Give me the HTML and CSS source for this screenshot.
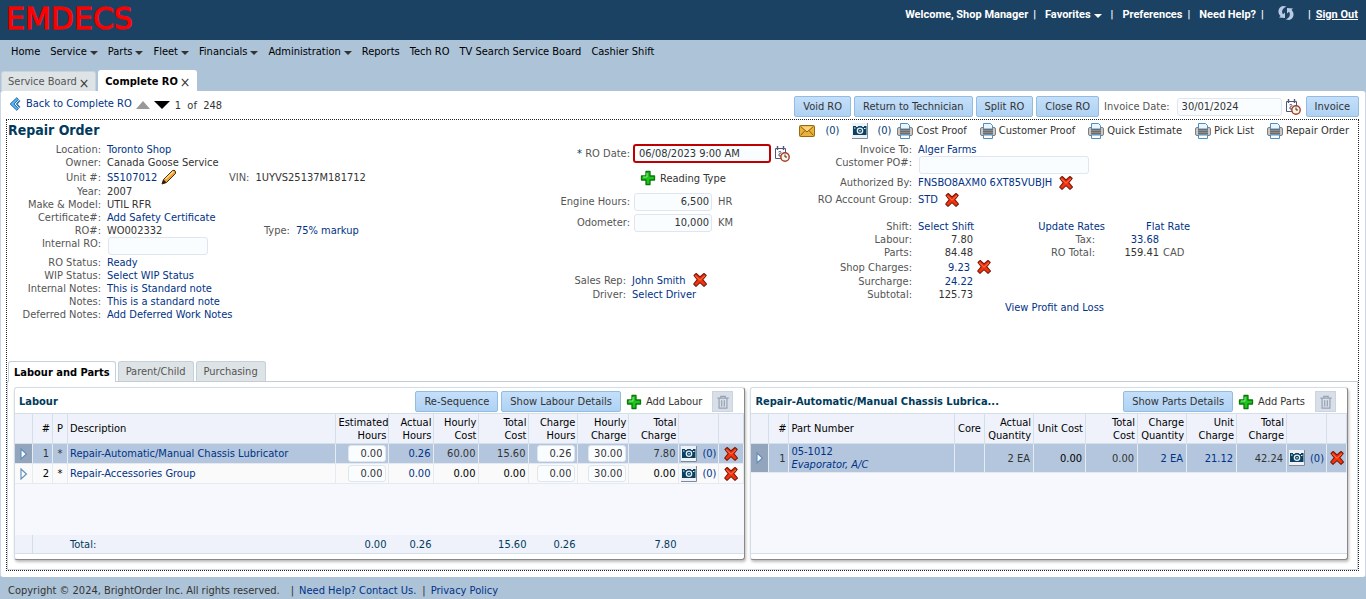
FILE: index.html
```html
<!DOCTYPE html>
<html lang="en">
<head>
<meta charset="utf-8">
<title>Complete RO</title>
<link rel="stylesheet" href="styles.css">
</head>
<body>
<svg class="sprite" aria-hidden="true">
  <symbol id="i-x" viewBox="0 0 16 16"><path d="M2 3.500 4.200 1.500 8 5 12 1.500 14.200 3.500 10.800 7.600 14.500 12 12 14.300 8 10.600 4 14.300 1.700 12 5.200 7.600Z" fill="#f5320c" stroke="#7c1a0a" stroke-width="1.100" stroke-linejoin="round"/><path d="M3.200 3.800 8 8.200 13 3.800" fill="none" stroke="#ff7a55" stroke-width="1"/></symbol>
  <symbol id="i-plus" viewBox="0 0 16 16"><path d="M6 1.500h4V6h4.500v4H10v4.500H6V10H1.500V6H6Z" fill="#1fc41f" stroke="#087808" stroke-width="1.300" stroke-linejoin="round"/><path d="M7 3v4H3" fill="none" stroke="#8df08d"/></symbol>
  <symbol id="i-print" viewBox="0 0 16 16"><rect x=".5" y="4.500" width="15" height="8" rx="1.500" fill="#c9c9c9" stroke="#7d7d7d"/><path d="M3.500.5h7l2 2V6h-9Z" fill="#e9f5ff" stroke="#4b8fc4"/><rect x="3" y="6" width="10" height="5.500" fill="#6d6d6d"/><path d="M3 7.500h10M3 9.500h10" stroke="#8c8c8c"/><path d="M3.500 12h9v3.500h-9Z" fill="#fff" stroke="#4b8fc4"/></symbol>
  <symbol id="i-cam" viewBox="0 0 16 16"><path d="M0 0h16v16H0Z" fill="#eef1f5"/><path d="M15.500 0v15.500H0" fill="none" stroke="#7e8b96"/><path d="M1 3h3v1h1.500L6.500 3h3l1 1H12V3h2.500v9H1Z" fill="#0a4060"/><circle cx="8" cy="7.800" r="3.300" fill="#e8f0f6"/><circle cx="8" cy="7.800" r="2" fill="#0a4060"/><circle cx="8" cy="7.800" r=".8" fill="#fff"/><path d="M2 5h1.500M12 5.500h1.500" stroke="#fff"/></symbol>
  <symbol id="i-mail" viewBox="0 0 16 16"><rect x=".5" y="2.500" width="15" height="11" rx="1" fill="#e9b23c" stroke="#99670d"/><path d="M2 3.500h12L8 8.500Z" fill="#fbd47c"/><path d="m1.500 3.500 6.500 5.500 6.500-5.500M1.500 12.500l4.500-5M14.500 12.500l-4.500-5" fill="none" stroke="#8b5f12"/></symbol>
  <symbol id="i-date" viewBox="0 0 16 16"><path d="M1.500 2.500h10v10h-10Z" fill="#fff" stroke="#55557a"/><path d="M3.500 0v4M9.500 0v4" stroke="#55557a" stroke-width="1.400"/><path d="M4.500 6q2.500-1.500 2.500.5 0 1-2 1.500v2h2" fill="none" stroke="#55557a"/><circle cx="11" cy="11" r="4.200" fill="#fff3e2" stroke="#a33b28" stroke-width="1.400"/><path d="M11 8.500V11h2" fill="none" stroke="#333"/></symbol>
  <symbol id="i-pencil" viewBox="0 0 16 16"><path d="M1 15 2.500 10.500 11.500 1.500Q15 .5 14.500 4.500L5.500 13.500Z" fill="#f0a030" stroke="#4a2d0c"/><path d="M1 15 2.500 10.500 5.500 13.500Z" fill="#2c1c10"/><path d="m4.500 10 8-7.500" stroke="#ffe09a" stroke-width="1.200"/></symbol>
  <symbol id="i-trash" viewBox="0 0 16 16"><path d="M1.500 3.500h13M5.500 3V1.500h5V3M3.500 4v11h9V4M6.500 6v7M9.500 6v7" fill="none" stroke="#97a3b4" stroke-width="1.400"/></symbol>
  <symbol id="i-back" viewBox="0 0 16 16"><path d="M10 .8 2.500 8 10 15.200l2-1.800L7 8l5-5.400Z" fill="#58b4f4" stroke="#145a9c"/><path d="M13.500 4 10 8l3.500 4" fill="none" stroke="#1c69ad" stroke-width="1.600"/></symbol>
  <symbol id="i-sync" viewBox="0 0 18 16"><path d="M9.500 1.500 6 1C1 2 0 8 3.500 11L2 12.500l6 .5V7.500L6 9.300C4 6.500 5.500 3 9.500 1.500Z" fill="#b9cbe4"/><path d="m8.500 14.500 3.500.5C17 14 18 8 14.500 5L16 3.500 10 3v5.500l2-1.800C14 9.500 12.500 13 8.500 14.500Z" fill="#b9cbe4"/></symbol>
  <symbol id="i-tri" viewBox="0 0 8 10"><path d="m1.500.800 4.500 4.200-4.500 4.200Z" fill="#fff" stroke="#6490bb"/></symbol>
</svg>

<header class="top">
  <div class="logo">EMDECS</div>
  <nav class="user">
    <span>Welcome, Shop Manager</span><i>|</i>
    <a class="fav" href="#">Favorites<b class="caret"></b></a><i>|</i>
    <a href="#">Preferences</a><i>|</i>
    <a href="#">Need Help?</a><i>|</i>
    <a class="sync" href="#" aria-label="Refresh"><svg><use href="#i-sync"/></svg></a><i>|</i>
    <a class="out" href="#">Sign Out</a>
  </nav>
</header>

<nav class="menu">
  <a href="#">Home</a><a href="#">Service<b class="caret"></b></a><a href="#">Parts<b class="caret"></b></a><a href="#">Fleet<b class="caret"></b></a><a href="#">Financials<b class="caret"></b></a><a href="#">Administration<b class="caret"></b></a><a href="#">Reports</a><a href="#">Tech RO</a><a href="#">TV Search Service Board</a><a href="#">Cashier Shift</a>
</nav>
<div class="tabs">
  <div class="tab"><a href="#">Service Board</a><button class="close" aria-label="Close Service Board">×</button></div>
  <div class="tab on"><a href="#">Complete RO</a><button class="close" aria-label="Close Complete RO">×</button></div>
</div>

<main>
  <div class="bar">
    <a class="back" href="#"><svg class="ic-s"><use href="#i-back"/></svg>Back to Complete RO</a>
    <button class="arrow up" aria-label="Previous"></button>
    <button class="arrow down" aria-label="Next"></button>
    <span class="pos">1&nbsp; of&nbsp; 248</span>
    <div class="actions">
      <button class="btn">Void RO</button>
      <button class="btn">Return to Technician</button>
      <button class="btn">Split RO</button>
      <button class="btn">Close RO</button>
      <label for="inv">Invoice Date:</label>
      <input id="inv" class="inv" value="30/01/2024">
      <button class="pick" aria-label="Pick invoice date"><svg class="ic"><use href="#i-date"/></svg></button>
      <button class="btn">Invoice</button>
    </div>
  </div>

  <section class="order">
    <div class="head">
      <h1>Repair Order</h1>
      <div class="tools">
        <a class="mail" href="#"><svg class="ic"><use href="#i-mail"/></svg>(0)</a>
        <a class="photo" href="#"><svg class="ic"><use href="#i-cam"/></svg>(0)</a>
        <a class="print" href="#"><svg class="ic"><use href="#i-print"/></svg>Cost Proof</a>
        <a class="print" href="#"><svg class="ic"><use href="#i-print"/></svg>Customer Proof</a>
        <a class="print" href="#"><svg class="ic"><use href="#i-print"/></svg>Quick Estimate</a>
        <a class="print" href="#"><svg class="ic"><use href="#i-print"/></svg>Pick List</a>
        <a class="print" href="#"><svg class="ic"><use href="#i-print"/></svg>Repair Order</a>
      </div>
    </div>

    <div class="form">
      <div class="col c1">
        <div class="row"><span class="lb">Location:</span><a href="#">Toronto Shop</a></div>
        <div class="row"><span class="lb">Owner:</span><span>Canada Goose Service</span></div>
        <div class="row mid"><span class="lb">Unit #:</span><span class="main vin"><a href="#">S5107012</a><button class="pick" aria-label="Edit unit"><svg class="ic"><use href="#i-pencil"/></svg></button></span><span class="lb2">VIN:</span><span>1UYVS25137M181712</span></div>
        <div class="row"><span class="lb">Year:</span><span>2007</span></div>
        <div class="row"><span class="lb">Make &amp; Model:</span><span>UTIL RFR</span></div>
        <div class="row"><span class="lb">Certificate#:</span><a href="#">Add Safety Certificate</a></div>
        <div class="row"><span class="lb">RO#:</span><span class="main type">WO002332</span><span class="lb2">Type:</span><a href="#">75% markup</a></div>
        <div class="row tall"><label class="lb" for="iro">Internal RO:</label><input id="iro" class="w-iro"></div>
        <div class="row"><span class="lb">RO Status:</span><a href="#">Ready</a></div>
        <div class="row"><span class="lb">WIP Status:</span><a href="#">Select WIP Status</a></div>
        <div class="row"><span class="lb">Internal Notes:</span><a href="#">This is Standard note</a></div>
        <div class="row"><span class="lb">Notes:</span><a href="#">This is a standard note</a></div>
        <div class="row"><span class="lb">Deferred Notes:</span><a href="#">Add Deferred Work Notes</a></div>
      </div>

      <div class="col c2">
        <div class="row r-date"><label class="lb" for="rod"><span class="star">*</span> RO Date:</label><input id="rod" class="w-rod" value="06/08/2023 9:00 AM"><button class="pick" aria-label="Pick RO date"><svg class="ic"><use href="#i-date"/></svg></button></div>
        <a class="add r-type" href="#"><svg class="ic"><use href="#i-plus"/></svg>Reading Type</a>
        <div class="row r-num"><label class="lb" for="eng">Engine Hours:</label><input id="eng" class="num w-num" value="6,500"><span class="unit">HR</span></div>
        <div class="row r-num"><label class="lb" for="odo">Odometer:</label><input id="odo" class="num w-num" value="10,000"><span class="unit">KM</span></div>
        <div class="people">
          <div class="row mid"><span class="lb">Sales Rep:</span><a href="#">John Smith</a><button class="pick" aria-label="Remove sales rep"><svg class="ic"><use href="#i-x"/></svg></button></div>
          <div class="row"><span class="lb">Driver:</span><a href="#">Select Driver</a></div>
        </div>
      </div>

      <div class="col c3">
        <div class="row"><span class="lb">Invoice To:</span><a href="#">Alger Farms</a></div>
        <div class="row tall"><label class="lb" for="po">Customer PO#:</label><input id="po" class="w-po"></div>
        <div class="row mid"><span class="lb">Authorized By:</span><a href="#">FNSBO8AXM0 6XT85VUBJH</a><button class="pick" aria-label="Remove authorizer"><svg class="ic"><use href="#i-x"/></svg></button></div>
        <div class="row mid"><span class="lb">RO Account Group:</span><a href="#">STD</a><button class="pick" aria-label="Remove account group"><svg class="ic"><use href="#i-x"/></svg></button></div>
        <div class="sums">
          <div>
            <div class="row"><span class="lb">Shift:</span><a href="#">Select Shift</a></div>
            <div class="row"><span class="lb">Labour:</span><span class="amt">7.80</span></div>
            <div class="row"><span class="lb">Parts:</span><span class="amt">84.48</span></div>
            <div class="row mid"><span class="lb">Shop Charges:</span><a class="amt short" href="#">9.23</a><button class="pick" aria-label="Remove shop charges"><svg class="ic"><use href="#i-x"/></svg></button></div>
            <div class="row"><span class="lb">Surcharge:</span><a class="amt" href="#">24.22</a></div>
            <div class="row"><span class="lb">Subtotal:</span><span class="amt">125.73</span></div>
          </div>
          <div class="rates">
            <div class="row"><a class="upd" href="#">Update Rates</a><a class="flat" href="#">Flat Rate</a></div>
            <div class="row"><span class="lb">Tax:</span><a class="amt" href="#">33.68</a></div>
            <div class="row"><span class="lb">RO Total:</span><span class="amt">159.41</span><span class="cur">CAD</span></div>
          </div>
        </div>
        <a class="profit" href="#">View Profit and Loss</a>
      </div>
    </div>

    <div class="subtabs">
      <button class="st on">Labour and Parts</button><button class="st">Parent/Child</button><button class="st">Purchasing</button>
    </div>

    <div class="panels">
      <section class="panel labour">
        <div class="ptool">
          <h2>Labour</h2>
          <button class="btn">Re-Sequence</button>
          <button class="btn">Show Labour Details</button>
          <a class="add" href="#"><svg class="ic"><use href="#i-plus"/></svg>Add Labour</a>
          <button class="trash" aria-label="Delete labour"><svg class="ic-s"><use href="#i-trash"/></svg></button>
        </div>
        <div class="grid">
          <table>
            <colgroup><col class="w18"><col class="w20"><col class="w15"><col><col class="w53"><col class="w45"><col class="w45"><col class="w50"><col class="w49"><col class="w51"><col class="w50"><col class="w40"><col class="w25"></colgroup>
            <thead><tr><th></th><th class="r">#</th><th>P</th><th class="l">Description</th><th class="r">Estimated Hours</th><th class="r">Actual Hours</th><th class="r">Hourly Cost</th><th class="r">Total Cost</th><th class="r">Charge Hours</th><th class="r">Hourly Charge</th><th class="r">Total Charge</th><th></th><th></th></tr></thead>
            <tbody>
              <tr class="sel"><td class="ex"><svg class="tri"><use href="#i-tri"/></svg></td><td class="r">1</td><td class="c">*</td><td><a href="#">Repair-Automatic/Manual Chassis Lubricator</a></td><td class="f"><input class="num" aria-label="Estimated hours, line 1" value="0.00"></td><td class="r"><a href="#">0.26</a></td><td class="r">60.00</td><td class="r">15.60</td><td class="f"><input class="num" aria-label="Charge hours, line 1" value="0.26"></td><td class="f"><input class="num" aria-label="Hourly charge, line 1" value="30.00"></td><td class="r">7.80</td><td class="ph"><a href="#"><svg class="ic"><use href="#i-cam"/></svg>(0)</a></td><td class="c"><button class="pick" aria-label="Delete line 1"><svg class="ic"><use href="#i-x"/></svg></button></td></tr>
              <tr class="alt"><td class="ex"><svg class="tri"><use href="#i-tri"/></svg></td><td class="r">2</td><td class="c">*</td><td><a href="#">Repair-Accessories Group</a></td><td class="f"><input class="num" aria-label="Estimated hours, line 2" value="0.00"></td><td class="r"><a href="#">0.00</a></td><td class="r">0.00</td><td class="r">0.00</td><td class="f"><input class="num" aria-label="Charge hours, line 2" value="0.00"></td><td class="f"><input class="num" aria-label="Hourly charge, line 2" value="30.00"></td><td class="r">0.00</td><td class="ph"><a href="#"><svg class="ic"><use href="#i-cam"/></svg>(0)</a></td><td class="c"><button class="pick" aria-label="Delete line 2"><svg class="ic"><use href="#i-x"/></svg></button></td></tr>
            </tbody>
          </table>
          <table class="total">
            <colgroup><col class="w18"><col class="w20"><col class="w15"><col><col class="w53"><col class="w45"><col class="w45"><col class="w50"><col class="w49"><col class="w51"><col class="w50"><col class="w40"><col class="w25"></colgroup>
            <tbody><tr><td class="first"></td><td></td><td></td><td>Total:</td><td class="r">0.00</td><td class="r">0.26</td><td></td><td class="r">15.60</td><td class="r">0.26</td><td></td><td class="r">7.80</td><td></td><td></td></tr></tbody>
          </table>
        </div>
      </section>

      <section class="panel parts">
        <div class="ptool">
          <h2>Repair-Automatic/Manual Chassis Lubrica...</h2>
          <button class="btn">Show Parts Details</button>
          <a class="add" href="#"><svg class="ic"><use href="#i-plus"/></svg>Add Parts</a>
          <button class="trash" aria-label="Delete parts"><svg class="ic-s"><use href="#i-trash"/></svg></button>
        </div>
        <div class="grid">
          <table>
            <colgroup><col class="w18"><col class="w20"><col><col class="w30"><col class="w49"><col class="w52"><col class="w52"><col class="w49"><col class="w50"><col class="w50"><col class="w40"><col class="w20"></colgroup>
            <thead><tr><th></th><th class="r">#</th><th class="l">Part Number</th><th>Core</th><th class="r">Actual Quantity</th><th class="r">Unit Cost</th><th class="r wrap">Total Cost</th><th class="r">Charge Quantity</th><th class="r">Unit Charge</th><th class="r">Total Charge</th><th></th><th></th></tr></thead>
            <tbody><tr class="sel two"><td class="ex"><svg class="tri"><use href="#i-tri"/></svg></td><td class="r">1</td><td class="pn"><a href="#">05-1012<br><em>Evaporator, A/C</em></a></td><td></td><td class="r">2 EA</td><td class="r dark">0.00</td><td class="r">0.00</td><td class="r"><a href="#">2 EA</a></td><td class="r"><a href="#">21.12</a></td><td class="r">42.24</td><td class="ph"><a href="#"><svg class="ic"><use href="#i-cam"/></svg>(0)</a></td><td class="c"><button class="pick" aria-label="Delete part 1"><svg class="ic"><use href="#i-x"/></svg></button></td></tr></tbody>
          </table>
        </div>
      </section>
    </div>
  </section>
</main>

<footer>
  <span>Copyright © 2024, BrightOrder Inc. All rights reserved.</span>
  <i>|</i><a href="#">Need Help? Contact Us.</a><i>|</i><a href="#">Privacy Policy</a>
</footer>
</body>
</html>
```
FILE: styles.css
```css
* { box-sizing: border-box; }
body {
  margin: 0;
  min-height: 100vh;
  display: flex;
  flex-direction: column;
  background: #adc3d8;
  color: #333;
  font: 11px/13px "DejaVu Sans Condensed", Tahoma, Roboto, sans-serif;
}
input, button { font: inherit; color: #333; }
button { background: none; border: 0; padding: 0; cursor: pointer; }
a { color: #003286; text-decoration: none; }
i { font-style: normal; }
.sprite { position: absolute; width: 0; height: 0; }
.ic { width: 16px; height: 16px; flex: none; display: block; }
.ic-s { width: 14px; height: 14px; flex: none; display: block; }
.pick { display: block; flex: none; }
.caret {
  display: inline-block;
  margin-left: 3px;
  vertical-align: 0;
  border: 4px solid transparent;
  border-top: 4px solid #333;
  border-bottom: 0;
}
input {
  height: 18px;
  padding: 0 4px;
  background: #fafdff;
  border: 1px solid #dfe6ed;
  border-radius: 3px;
  min-width: 0;
}
.num { text-align: right; padding: 0 2px; }

/* top bar */
.top { height: 40px; background: #1c4263; display: flex; justify-content: space-between; padding: 0 8px 0 6px; }
.logo { font: 30px/38px "DejaVu Sans", sans-serif; color: #f00; -webkit-text-stroke: 1px #f00; }
.user { display: flex; color: #fff; font: bold 11px/29px Roboto, sans-serif; gap: 5px; }
.user a { color: #fff; }
.user .caret { border-top-color: #fff; }
.user i + a { margin-left: 4px; }
.user .fav + i { margin-left: 4px; }
.user i + .out { margin-left: 0; text-decoration: underline; }
.sync { padding: 5px 8px 0 4px; }
.sync svg { width: 18px; height: 16px; display: block; }

.menu { display: flex; gap: 10px; padding: 5px 11px 0; height: 30px; }
.menu a { color: #000; line-height: 13px; }
.tabs { display: flex; align-items: flex-end; gap: 2px; height: 21px; padding-left: 1px; }
.tab {
  display: flex; align-items: center; gap: 2px; height: 20px; padding: 0 6px;
  background: #dee3e6; border: 1px solid #c7d4e0; border-bottom: 0; border-radius: 3px 3px 0 0;
}
.tab a { color: #555; }
.tab.on { height: 21px; background: #fff; border-color: #fff; }
.tab.on a { color: #000; font-weight: bold; }
.close { font-size: 14px; line-height: 13px; padding-top: 3px; }

/* page body */
main {
  flex: 1;
  display: flex;
  flex-direction: column;
  padding: 0 6px 6px 5px;
  background: #fff;
  border-left: 1px solid #ccd8e8;
  border-right: 1px solid #ccd8e8;
  border-radius: 3px;
}
.bar { display: flex; align-items: center; height: 28px; }
.back { display: flex; align-items: center; gap: 4px; margin-left: 2px; padding-bottom: 3px; }
.arrow { border: 7px solid transparent; }
.up { border-top: 0; border-bottom: 8px solid #999; margin-left: 4px; }
.down { border: 8px solid transparent; border-bottom: 0; border-top-color: #000; margin: 0 5px 0 4px; }
.actions { display: flex; align-items: center; gap: 3px; margin-left: auto; padding-top: 3px; }
.actions label { padding: 0 4px 0 2px; color: #555; }
.actions .inv { width: 105px; }
.actions .pick { margin: 0 2px 0 0; }
.btn {
  height: 21px; padding: 0 8px; white-space: nowrap;
  background: linear-gradient(#c4dffa, #afd2f3);
  border: 1px solid #94bbe0; border-radius: 2px;
}
.order { flex: 1; display: flex; flex-direction: column; border: 1px dotted #222; }
.head { display: flex; align-items: center; height: 21px; }
h1 { margin: 0 0 0 1px; font-size: 14px; color: #003a5c; }
.tools { display: flex; gap: 13px; margin-left: auto; padding-right: 9px; }
.tools a { display: flex; align-items: center; gap: 3px; color: #333; }
.tools .mail { gap: 10px; color: #003a78; }
.tools .photo { gap: 9px; margin-right: -7px; color: #003a78; }

/* order details */
.form { display: grid; grid-template-columns: 94px 437px 92px 191px 95px 1fr; padding-top: 2px; height: 220px; }
.col { display: grid; grid-template-columns: subgrid; align-content: start; }
.c1 { grid-column: 1 / 3; }
.c2 { grid-column: 3 / 5; }
.c3 { grid-column: 5 / 7; }
.row { display: flex; height: 13px; gap: 6px; white-space: nowrap; }
.col > * { grid-column: 1 / -1; }
.mid { height: 16px; align-items: center; }
.tall { height: 19px; }
.lb { flex: none; text-align: right; color: #555; }
.lb2 { color: #555; }
.c1 .lb { width: 94px; }
.c1 input { margin-left: 1px; }
.main { display: flex; align-items: center; gap: 4px; }
.vin { width: 116px; }
.type { width: 151px; }
.w-iro { width: 100px; }
.c2 .lb { width: 92px; }
.c2 .row { gap: 4px; }
.c2 .row.r-date { height: 21px; align-items: center; gap: 3px; }
.star { color: #003a5c; }
.w-rod { width: 138px; height: 19px; border: 2px solid #c00000; }
.add { display: flex; align-items: center; gap: 4px; color: #333; white-space: nowrap; }
.r-type { padding: 6px 0 5px 102px; }
.c2 .r-num { height: 21px; align-items: center; }
.w-num { width: 78px; }
.unit { color: #555; padding-left: 2px; }
.people { padding-top: 39px; }
.people .lb { width: 88px; }
.c2 .people .row { gap: 6px; }
.c3 .lb { width: 97px; }
.c3 { margin-left: -6px; }
.c3 .tall { height: 18px; }
.w-po { width: 170px; margin-left: 1px; }
.c3 .mid { height: 17px; }
.sums { display: flex; padding-top: 12px; }
.amt { width: 55px; text-align: right; }
.short { width: 52px; }
.c3 .sums .mid { height: 16px; }
.rates { margin-left: 33px; }
.rates .lb { width: 70px; }
.rates .amt { width: 60px; }
.rates .row { gap: 4px; }
.upd { width: 80px; text-align: right; }
.flat { padding-left: 37px; }
.cur { color: #555; }
.profit { padding-left: 190px; }

/* lower tabs and panels */
.subtabs { display: flex; align-items: flex-end; gap: 2px; height: 21px; padding-left: 1px; border-bottom: 1px solid #c2ccd8; }
.st { height: 20px; padding: 0 7px; color: #555; background: #dee3e6; border: 1px solid #c3d0dd; border-bottom: 0; border-radius: 3px 3px 0 0; }
.st.on { height: 21px; margin-bottom: -1px; padding: 0 5px; color: #000; font-weight: bold; background: #fff; }
.panels {
  flex: 1; display: grid; grid-template-columns: 732fr 598fr; gap: 5px; padding: 5px 9px 9px 6px;
  border: 1px solid #ccd8e4; border-top: 0;
}
.panel {
  display: flex; flex-direction: column; min-width: 0; padding-bottom: 5px;
  background: #fff; border: 1px solid #d3dde8; border-right-color: #888; border-bottom-color: #888;
  border-radius: 3px; box-shadow: 1px 2px 3px #bbb;
}
.ptool { display: flex; align-items: center; height: 25px; padding: 2px 11px 0 4px; gap: 3px; }
.ptool .add { padding: 0 3px 0 2px; }
h2 { margin: 0 auto 0 0; font-size: 11px; color: #003a5c; }
.trash { width: 21px; height: 21px; margin-left: 4px; display: grid; place-items: center; background: #d8dfe8; border: 1px solid #ccd4de; }
.grid { flex: 1; display: flex; flex-direction: column; justify-content: space-between; background: #f7f8fd; border-top: 1px solid #d3dfe9; border-bottom: 1px solid #d3dfe9; }
table { width: 100%; table-layout: fixed; border-collapse: separate; border-spacing: 0; }
.w15 { width: 15px; } .w18 { width: 18px; } .w20 { width: 20px; } .w25 { width: 25px; }
.w30 { width: 30px; } .w40 { width: 40px; } .w45 { width: 45px; } .w49 { width: 49px; }
.w50 { width: 50px; } .w51 { width: 51px; } .w52 { width: 52px; } .w53 { width: 53px; }
th { height: 30px; padding: 0 2px; font-weight: normal; color: #000; background: #eff2fb; border-right: 1px solid #d3dfe9; border-bottom: 1px solid #d3dfe9; }
.l { text-align: left; }
th.wrap { padding-left: 16px; }
td { height: 20px; padding: 0 2px; white-space: nowrap; color: #000; border-right: 1px solid #e6ebf2; border-bottom: 1px solid #e6e9ef; }
.r { text-align: right; }
td.r { padding-right: 3px; }
.c, .ex { text-align: center; }
.c .pick, .ex .tri { margin: 0 auto; }
.tri { width: 10px; height: 12px; display: block; }
.sel td { background: #b3c6dd; color: #333; }
.sel .ex { background: #92a5bd; }
.sel .dark { color: #000; }
.alt td { background: #fafafa; }
.two td { height: 29px; }
.f { text-align: right; }
td input { width: 38px; height: 17px; display: block; margin-left: auto; }
td .num { padding-right: 3px; }
.ph a { display: flex; align-items: center; gap: 5px; }
.total td { height: 18px; color: #003a5c; background: #eff2fb; border: 0; }
.total .first { border-right: 1px solid #d3dfe9; }

footer { height: 22px; display: flex; align-items: center; gap: 5px; padding: 4px 8px 0; }
footer span { margin-right: 6px; }
footer i + a { margin-right: 1px; }
```
